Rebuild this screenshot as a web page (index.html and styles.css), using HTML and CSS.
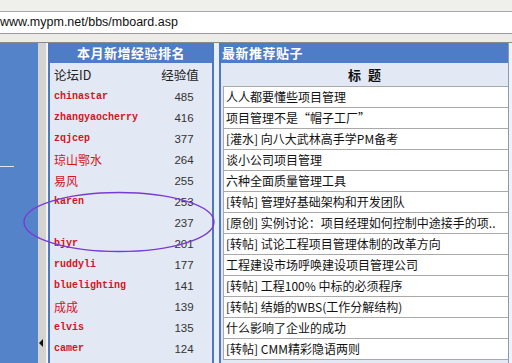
FILE: index.html
```html
<!DOCTYPE html>
<html lang="zh">
<head>
    <meta charset="UTF-8">
    <title>mboard</title>
    <link rel="stylesheet" href="styles.css">
</head>
<body>
    <div id="wrapper">
        <div class="topbar"></div>
        <div class="addr">www.mypm.net/bbs/mboard.asp</div>
        <div class="band"></div>
        <div class="main">
            <div class="side"><div class="side-line"></div></div>
            <div class="split"><span class="arrow"></span></div>
            <div class="rank">
                <div class="cap">本月新增经验排名</div>
                <div class="rank-head"><span>论坛ID</span><span class="num">经验值</span></div>
                <div class="rank-row"><span class="id">chinastar</span><span class="num">485</span></div>
                <div class="rank-row"><span class="id">zhangyaocherry</span><span class="num">416</span></div>
                <div class="rank-row"><span class="id">zqjcep</span><span class="num">377</span></div>
                <div class="rank-row"><span class="id cn">琼山鄂水</span><span class="num">264</span></div>
                <div class="rank-row"><span class="id cn">易风</span><span class="num">255</span></div>
                <div class="rank-row"><span class="id">karen</span><span class="num">253</span></div>
                <div class="rank-row"><span class="id"></span><span class="num">237</span></div>
                <div class="rank-row"><span class="id">bjyr</span><span class="num">201</span></div>
                <div class="rank-row"><span class="id">ruddyli</span><span class="num">177</span></div>
                <div class="rank-row"><span class="id">bluelighting</span><span class="num">141</span></div>
                <div class="rank-row"><span class="id cn">成成</span><span class="num">139</span></div>
                <div class="rank-row"><span class="id">elvis</span><span class="num">135</span></div>
                <div class="rank-row"><span class="id">camer</span><span class="num">124</span></div>
            </div>
            <div class="gutter"></div>
            <div class="posts">
                <div class="cap left">最新推荐贴子</div>
                <div class="post-head">标&nbsp;题</div>
                <div class="post">人人都要懂些项目管理</div>
                <div class="post">项目管理不是“帽子工厂”</div>
                <div class="post">[灌水] 向八大武林高手学PM备考</div>
                <div class="post">谈小公司项目管理</div>
                <div class="post">六种全面质量管理工具</div>
                <div class="post">[转帖] 管理好基础架构和开发团队</div>
                <div class="post">[原创] 实例讨论：项目经理如何控制中途接手的项..</div>
                <div class="post">[转帖] 试论工程项目管理体制的改革方向</div>
                <div class="post">工程建设市场呼唤建设项目管理公司</div>
                <div class="post">[转帖] 工程100% 中标的必须程序</div>
                <div class="post">[转帖] 结婚的WBS(工作分解结构)</div>
                <div class="post">什么影响了企业的成功</div>
                <div class="post">[转帖] CMM精彩隐语两则</div>
            </div>
            <div class="edge"></div>
        </div>
        <!-- 손으로 그린 동그라미 -->
        <svg class="mark" width="200" height="66" viewBox="0 0 200 66">
            <ellipse cx="98" cy="32" rx="95" ry="29.5" fill="none" stroke="#7a3ad6" stroke-width="1.4"/>
        </svg>
    </div>
</body>
</html>
```

FILE: styles.css
```css
body{
    margin: 0;
    background: #fff;
}
#wrapper{
    width: 512px;
    height: 363px;
    overflow: hidden;
    position: relative;
    font-family: "Noto Sans CJK SC", sans-serif;
    font-size: 12px;
}
.topbar{
    height: 11px;
    background: #efefec;
    border-bottom: 1px solid #a7a7a7;
}
.addr{
    height: 21px;
    line-height: 21px;
    background: #fff;
    border-bottom: 1px solid #9a9a9a;
    font-family: "Liberation Sans", sans-serif;
    font-size: 12.5px;
    color: #111;
    padding-left: 0;
}
.band{
    height: 8px;
    background: #ecebe8;
    border-bottom: 1px solid #8a8a8a;
}
.main{
    display: flex;
    height: 320px;
}
.side{
    width: 38px;
    background: #5583c9;
}
.side-line{
    width: 14px;
    height: 1px;
    background: #dfe6f2;
    margin-top: 123px;
}
.split{
    width: 10px;
    background: #d5d3cf;
    border-right: 2px solid #f4f4f4;
    display: flex;
    align-items: flex-end;
    justify-content: center;
    padding-bottom: 16px;
    box-sizing: border-box;
}
.arrow{
    width: 0;
    height: 0;
    border-top: 4px solid transparent;
    border-bottom: 4px solid transparent;
    border-right: 4px solid #111;
    margin-right: 2px;
}
.rank{
    width: 166px;
    box-sizing: border-box;
    background: #e2e9f4;
    border-left: 2px solid #4c79c2;
    border-right: 2px solid #4c79c2;
}
.cap{
    height: 20px;
    line-height: 20px;
    background: #4e7cc6;
    color: #fff;
    font-weight: bold;
    font-size: 13px;
    text-align: center;
    letter-spacing: 0.5px;
}
.cap.left{
    text-align: left;
    padding-left: 1px;
}
.rank-head{
    height: 23px;
    display: flex;
    align-items: center;
    padding-left: 4px;
    color: #222;
    font-size: 12.5px;
}
.rank-row{
    height: 21px;
    display: flex;
    align-items: center;
    padding-left: 4px;
}
.rank-head span:first-child, .id{
    flex: 1;
}
.id{
    font-family: "Liberation Mono", monospace;
    font-weight: bold;
    font-size: 10px;
    color: #d4141c;
}
.id.cn{
    font-family: "Noto Sans CJK SC", sans-serif;
    font-weight: normal;
    font-size: 12px;
}
.num{
    width: 56px;
    text-align: center;
    font-family: "Liberation Sans", sans-serif;
    font-size: 11.5px;
    color: #333;
}
.rank-head .num{
    font-family: "Noto Sans CJK SC", sans-serif;
    font-size: 12.5px;
    width: 52px;
    margin-right: 6px;
    color: #222;
}
.gutter{
    width: 5px;
    background: #e8eef8;
}
.posts{
    flex: 1;
    background: #e2e9f4;
    border-left: 2px solid #4c79c2;
    overflow: hidden;
}
.post-head{
    height: 23px;
    line-height: 23px;
    text-align: center;
    font-weight: bold;
    font-size: 13px;
    letter-spacing: 2px;
    color: #111;
    margin-left: 2px;
    border-bottom: 1px solid #a9a9a9;
}
.post{
    height: 20px;
    line-height: 20px;
    background: #fff;
    margin-left: 2px;
    padding-left: 2px;
    border-bottom: 1px solid #a9a9a9;
    border-left: 1px solid #a9a9a9;
    color: #111;
    white-space: nowrap;
    overflow: hidden;
}
.edge{
    width: 3px;
    background: #eef2f9;
    border-left: 1px solid #8a9ab8;
}
.mark{
    position: absolute;
    left: 21px;
    top: 190px;
}
```
